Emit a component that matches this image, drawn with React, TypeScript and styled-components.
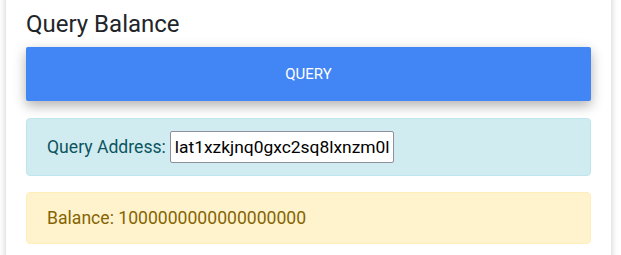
import React from 'react';
import styled, {createGlobalStyle} from 'styled-components';

const GlobalStyle = createGlobalStyle`
  html, body {
    margin: 0;
    padding: 0;
    background: #fff;
    overflow: hidden;
  }

  body {
    font-family: Roboto, "Liberation Sans", sans-serif;
    color: #212529;
  }
`;

const Page = styled.div`
  height: 255px;
  padding: 0 10px 0 6px;
  overflow: hidden;
`;

const Card = styled.div`
  margin-top: -12px;
  min-height: 300px;
  padding: 22px 20px 0;
  background: #fff;
  box-shadow: 0 0 7px rgba(0, 0, 0, .22);
  display: flex;
  flex-direction: column;
`;

const Title = styled.h3`
  margin: 0 0 8px;
  font-size: 24px;
  font-weight: 400;
  line-height: 1.2;
  color: #212529;
`;

const QueryButton = styled.button`
  height: 54px;
  margin-bottom: 17px;
  border: none;
  border-radius: 2px;
  background: #4285f4;
  color: #fff;
  font-family: inherit;
  font-size: 15px;
  text-transform: uppercase;
  box-shadow: 0 5px 11px rgba(0, 0, 0, .18), 0 4px 15px rgba(0, 0, 0, .15);
  cursor: pointer;
`;

const Alert = styled.div<{$kind: 'info' | 'warning'}>`
  display: flex;
  align-items: center;
  gap: 4px;
  margin-bottom: 16px;
  padding: 12px 20px;
  border: 1px solid ${p => p.$kind === 'info' ? '#bee5eb' : '#ffeeba'};
  border-radius: 4px;
  background: ${p => p.$kind === 'info' ? '#d1ecf1' : '#fff3cd'};
  color: ${p => p.$kind === 'info' ? '#0c5460' : '#856404'};
  font-size: 17.6px;
  line-height: 1.5;
`;

const AddressInput = styled.input`
  box-sizing: border-box;
  width: 224px;
  height: 32px;
  padding: 1px 4px;
  border: 1px solid #8f8f9d;
  border-radius: 2px;
  background: #fff;
  color: #000;
  font-family: inherit;
  font-size: 17.4px;
`;

export default function App() {
  return (
    <>
      <GlobalStyle/>
      <Page>
        <Card>
          <Title>Query Balance</Title>
          <QueryButton>Query</QueryButton>
          <Alert $kind="info">
            Query Address:
            <AddressInput defaultValue="lat1xzkjnq0gxc2sq8lxnzm0lpz2aqd4ejcsrq0j8z"/>
          </Alert>
          <Alert $kind="warning">Balance: 1000000000000000000</Alert>
        </Card>
      </Page>
    </>
  );
}
